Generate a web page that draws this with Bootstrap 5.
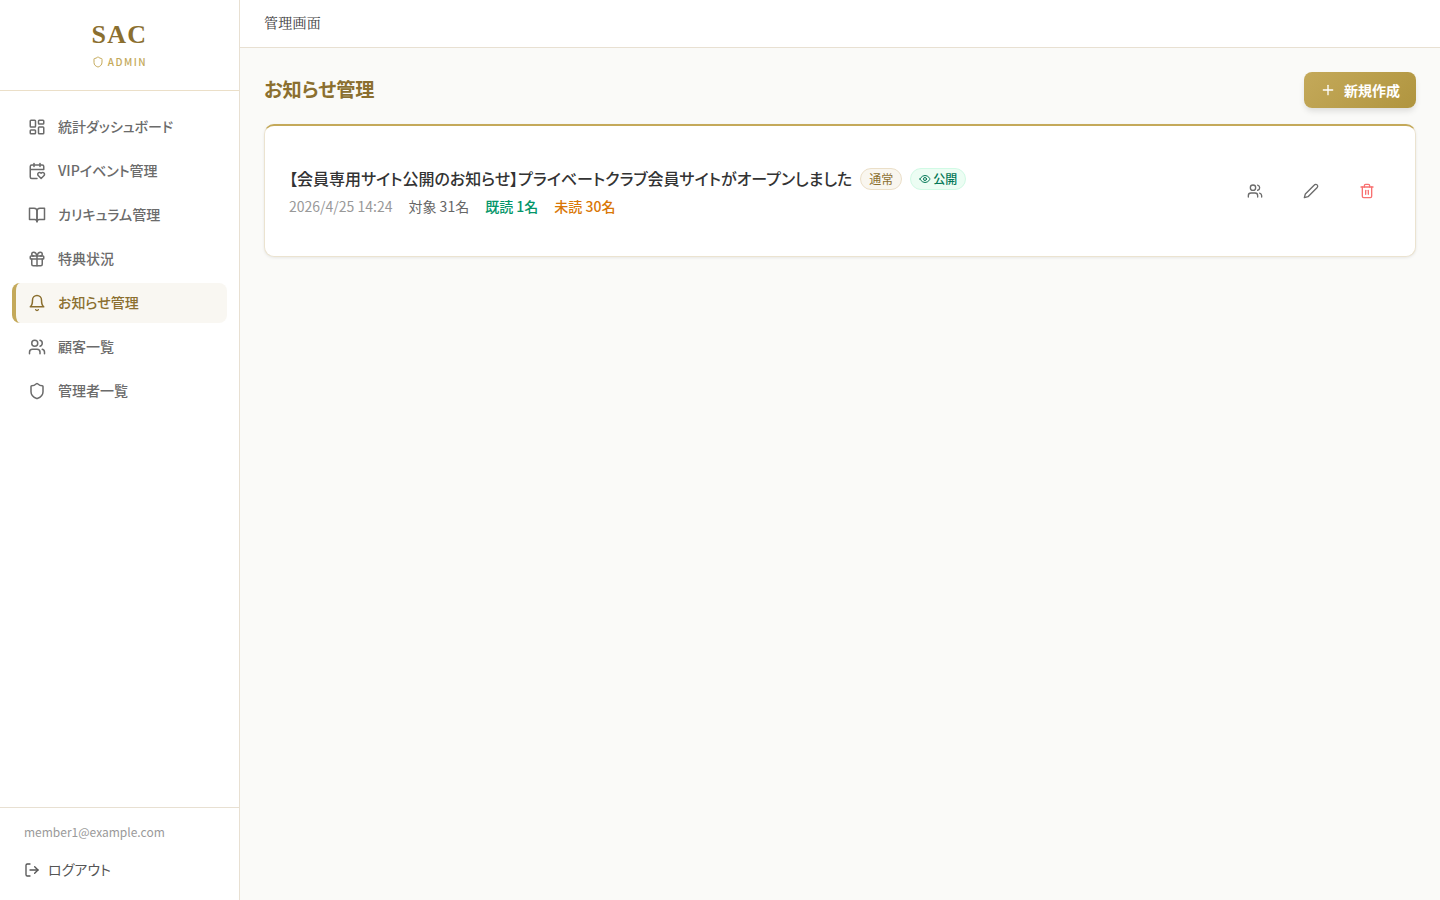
<!DOCTYPE html>
<html lang="ja">
<head>
    <meta charset="UTF-8">
    <meta name="viewport" content="width=device-width, initial-scale=1.0">
    <title>お知らせ管理</title>
    <link href="https://cdn.jsdelivr.net/npm/bootstrap@5.3.0/dist/css/bootstrap.min.css" rel="stylesheet">
    <style>
        body {
            font-family: "Noto Sans CJK JP", "Noto Sans", sans-serif;
            font-feature-settings: "palt";
            background: #fafaf8;
            color: #333;
            height: 900px;
            overflow: hidden;
        }
        svg {
            fill: none;
            stroke: currentColor;
            stroke-width: 2;
            stroke-linecap: round;
            stroke-linejoin: round;
            flex-shrink: 0;
        }
        .sidebar {
            width: 240px;
            height: 900px;
            background: #fff;
            border-right: 1px solid #e8e0d2;
        }
        .brand {
            height: 91px;
            border-bottom: 1px solid #ebdfc8;
            padding-top: 19px;
        }
        .brand-name {
            font-family: "Liberation Serif", serif;
            font-size: 26px;
            font-weight: 700;
            line-height: 32px;
            letter-spacing: 1.3px;
            color: #8b6f2f;
        }
        .brand-sub {
            margin-top: 3px;
            font-size: 10px;
            font-weight: 500;
            line-height: 16px;
            letter-spacing: 1.5px;
            color: #c4a95a;
        }
        .side-nav {
            padding: 16px 12px;
        }
        .side-link {
            height: 40px;
            gap: 12px;
            padding: 0 0 1px 16px;
            border-radius: 8px;
            font-size: 14px;
            font-weight: 500;
            color: #6b6b6b;
            text-decoration: none;
        }
        .side-link svg {
            margin-top: 1px;
        }
        .side-link.active {
            padding-left: 12px;
            border-left: 4px solid #c4a95a;
            background: #f9f7f2;
            color: #8b6f2f;
        }
        .side-foot {
            border-top: 1px solid #e8e0d2;
            padding: 15px 24px 0;
            height: 93px;
        }
        .side-email {
            font-size: 12px;
            line-height: 18px;
            color: #9a9a9a;
        }
        .side-logout {
            font-size: 14px;
            color: #555;
            text-decoration: none;
            margin-top: 18px;
        }
        .topbar {
            height: 48px;
            padding: 0 0 2px 24px;
            background: #fff;
            border-bottom: 1px solid #e8e0d2;
            font-family: "Noto Serif CJK JP", "Liberation Serif", "Noto Sans CJK JP", serif;
            font-size: 14px;
            letter-spacing: .25px;
            color: #444;
        }
        .page-title {
            font-size: 19.2px;
            font-weight: 700;
            color: #8b6f2f;
        }
        .btn-new {
            width: 112px;
            height: 36px;
            border: 0;
            border-radius: 8px;
            background: linear-gradient(135deg, #c4a95a, #b0953f);
            box-shadow: 0 4px 6px -1px rgba(0, 0, 0, .12);
            color: #fff;
            font-size: 14px;
            font-weight: 700;
        }
        .btn-new:hover {
            background: linear-gradient(135deg, #c4a95a, #b0953f);
            color: #fff;
        }
        .notice-card {
            height: 133px;
            padding: 0 24px;
            background: #fff;
            border: 1px solid #ebe3d0;
            border-top: 2px solid #c4a95a;
            border-radius: 10px;
            box-shadow: 0 1px 3px rgba(0, 0, 0, .08);
        }
        .notice-body {
            padding-top: 1px;
        }
        .notice-title {
            font-size: 16px;
            font-weight: 500;
            line-height: 24px;
            color: #333;
        }
        .tag {
            height: 22px;
            margin-top: 2px;
            padding: 0 8px;
            border-radius: 11px;
            font-size: 12px;
            font-weight: 400;
        }
        .tag-normal {
            background: #f9f6ef;
            border: 1px solid #ebdfc8;
            color: #8b6f2f;
        }
        .tag-public {
            gap: 2px;
            background: #ecfdf3;
            border: 1px solid #d1fae5;
            color: #047857;
            font-weight: 500;
        }
        .notice-meta {
            margin-top: 6px;
            font-size: 14px;
            color: #666;
        }
        .meta-date { color: #999; }
        .meta-read { color: #059669; font-weight: 500; }
        .meta-unread { color: #d97706; font-weight: 500; }
        .act-btn {
            width: 48px;
            height: 36px;
            padding: 0;
            border: 0;
            background: transparent;
            color: #6b6b6b;
        }
        .act-del { color: #f87171; }
    </style>
</head>
<body>
    <div class="d-flex">
        <aside class="sidebar d-flex flex-column flex-shrink-0">
            <div class="brand text-center">
                <div class="brand-name">SAC</div>
                <div class="brand-sub d-flex align-items-center justify-content-center gap-1">
                    <svg width="12" height="12" viewBox="0 0 24 24"><path d="M20 13c0 5-3.5 7.5-7.66 8.95a1 1 0 0 1-.67-.01C7.5 20.5 4 18 4 13V6a1 1 0 0 1 1-1c2 0 4.5-1.2 6.24-2.72a1.17 1.17 0 0 1 1.52 0C14.51 3.81 17 5 19 5a1 1 0 0 1 1 1z"/></svg>
                    <span>ADMIN</span>
                </div>
            </div>
            <nav class="side-nav flex-grow-1 d-flex flex-column gap-1">
                <a class="side-link d-flex align-items-center" href="#">
                    <svg width="18" height="18" viewBox="0 0 24 24"><rect x="3" y="3" width="7" height="9" rx="1"/><rect x="14" y="3" width="7" height="5" rx="1"/><rect x="14" y="12" width="7" height="9" rx="1"/><rect x="3" y="16" width="7" height="5" rx="1"/></svg>
                    統計ダッシュボード
                </a>
                <a class="side-link d-flex align-items-center" href="#">
                    <svg width="18" height="18" viewBox="0 0 24 24"><path d="M3 10h18V6a2 2 0 0 0-2-2H5a2 2 0 0 0-2 2v14c0 1.1.9 2 2 2h7"/><path d="M8 2v4"/><path d="M16 2v4"/><path d="M21.29 14.7a2.43 2.43 0 0 0-2.65-.52c-.3.12-.57.3-.8.53l-.34.34-.35-.34a2.43 2.43 0 0 0-2.65-.53c-.3.12-.56.3-.79.53-.95.94-1 2.53.2 3.74L17.5 22l3.6-3.55c1.2-1.21 1.14-2.8.19-3.74Z"/></svg>
                    VIPイベント管理
                </a>
                <a class="side-link d-flex align-items-center" href="#">
                    <svg width="18" height="18" viewBox="0 0 24 24"><path d="M2 3h6a4 4 0 0 1 4 4v14a3 3 0 0 0-3-3H2z"/><path d="M22 3h-6a4 4 0 0 0-4 4v14a3 3 0 0 1 3-3h7z"/></svg>
                    カリキュラム管理
                </a>
                <a class="side-link d-flex align-items-center" href="#">
                    <svg width="18" height="18" viewBox="0 0 24 24"><rect x="3" y="8" width="18" height="4" rx="1"/><path d="M12 8v13"/><path d="M19 12v7a2 2 0 0 1-2 2H7a2 2 0 0 1-2-2v-7"/><path d="M7.5 8a2.5 2.5 0 0 1 0-5A4.8 8 0 0 1 12 8a4.8 8 0 0 1 4.5-5 2.5 2.5 0 0 1 0 5"/></svg>
                    特典状況
                </a>
                <a class="side-link active d-flex align-items-center" href="#">
                    <svg width="18" height="18" viewBox="0 0 24 24"><path d="M6 8a6 6 0 0 1 12 0c0 7 3 9 3 9H3s3-2 3-9"/><path d="M10.3 21a1.94 1.94 0 0 0 3.4 0"/></svg>
                    お知らせ管理
                </a>
                <a class="side-link d-flex align-items-center" href="#">
                    <svg width="18" height="18" viewBox="0 0 24 24"><path d="M16 21v-2a4 4 0 0 0-4-4H6a4 4 0 0 0-4 4v2"/><circle cx="9" cy="7" r="4"/><path d="M22 21v-2a4 4 0 0 0-3-3.87"/><path d="M16 3.13a4 4 0 0 1 0 7.75"/></svg>
                    顧客一覧
                </a>
                <a class="side-link d-flex align-items-center" href="#">
                    <svg width="18" height="18" viewBox="0 0 24 24"><path d="M20 13c0 5-3.5 7.5-7.66 8.95a1 1 0 0 1-.67-.01C7.5 20.5 4 18 4 13V6a1 1 0 0 1 1-1c2 0 4.5-1.2 6.24-2.72a1.17 1.17 0 0 1 1.52 0C14.51 3.81 17 5 19 5a1 1 0 0 1 1 1z"/></svg>
                    管理者一覧
                </a>
            </nav>
            <div class="side-foot">
                <div class="side-email">member1@example.com</div>
                <a class="side-logout d-flex align-items-center gap-2" href="#">
                    <svg width="16" height="16" viewBox="0 0 24 24"><path d="M9 21H5a2 2 0 0 1-2-2V5a2 2 0 0 1 2-2h4"/><polyline points="16 17 21 12 16 7"/><line x1="21" y1="12" x2="9" y2="12"/></svg>
                    ログアウト
                </a>
            </div>
        </aside>
        <div class="flex-grow-1">
            <header class="topbar d-flex align-items-center">管理画面</header>
            <main class="p-4">
                <div class="d-flex justify-content-between align-items-center mb-3">
                    <h1 class="page-title m-0">お知らせ管理</h1>
                    <button class="btn btn-new d-flex align-items-center justify-content-center gap-2 p-0" type="button">
                        <svg width="16" height="16" viewBox="0 0 24 24"><path d="M5 12h14"/><path d="M12 5v14"/></svg>
                        新規作成
                    </button>
                </div>
                <div class="notice-card d-flex align-items-center justify-content-between">
                    <div class="notice-body">
                        <div class="d-flex align-items-center gap-2">
                            <span class="notice-title">【会員専用サイト公開のお知らせ】プライベートクラブ会員サイトがオープンしました</span>
                            <span class="tag tag-normal d-inline-flex align-items-center">通常</span>
                            <span class="tag tag-public d-inline-flex align-items-center">
                                <svg width="12" height="12" viewBox="0 0 24 24"><path d="M2 12s3-7 10-7 10 7 10 7-3 7-10 7-10-7-10-7Z"/><circle cx="12" cy="12" r="3"/></svg>
                                公開
                            </span>
                        </div>
                        <div class="notice-meta d-flex gap-3">
                            <span class="meta-date">2026/4/25 14:24</span>
                            <span>対象 31名</span>
                            <span class="meta-read">既読 1名</span>
                            <span class="meta-unread">未読 30名</span>
                        </div>
                    </div>
                    <div class="d-flex gap-2">
                        <button class="act-btn d-flex align-items-center justify-content-center" type="button"><svg width="16" height="16" viewBox="0 0 24 24"><path d="M16 21v-2a4 4 0 0 0-4-4H6a4 4 0 0 0-4 4v2"/><circle cx="9" cy="7" r="4"/><path d="M22 21v-2a4 4 0 0 0-3-3.87"/><path d="M16 3.13a4 4 0 0 1 0 7.75"/></svg></button>
                        <button class="act-btn d-flex align-items-center justify-content-center" type="button"><svg width="16" height="16" viewBox="0 0 24 24"><path d="M17 3a2.85 2.83 0 1 1 4 4L7.5 20.5 2 22l1.5-5.5Z"/></svg></button>
                        <button class="act-btn act-del d-flex align-items-center justify-content-center" type="button"><svg width="16" height="16" viewBox="0 0 24 24"><path d="M3 6h18"/><path d="M19 6v14c0 1-1 2-2 2H7c-1 0-2-1-2-2V6"/><path d="M8 6V4c0-1 1-2 2-2h4c1 0 2 1 2 2v2"/><line x1="10" y1="11" x2="10" y2="17"/><line x1="14" y1="11" x2="14" y2="17"/></svg></button>
                    </div>
                </div>
            </main>
        </div>
    </div>
    <script src="https://cdn.jsdelivr.net/npm/bootstrap@5.3.0/dist/js/bootstrap.bundle.min.js"></script>
</body>
</html>
